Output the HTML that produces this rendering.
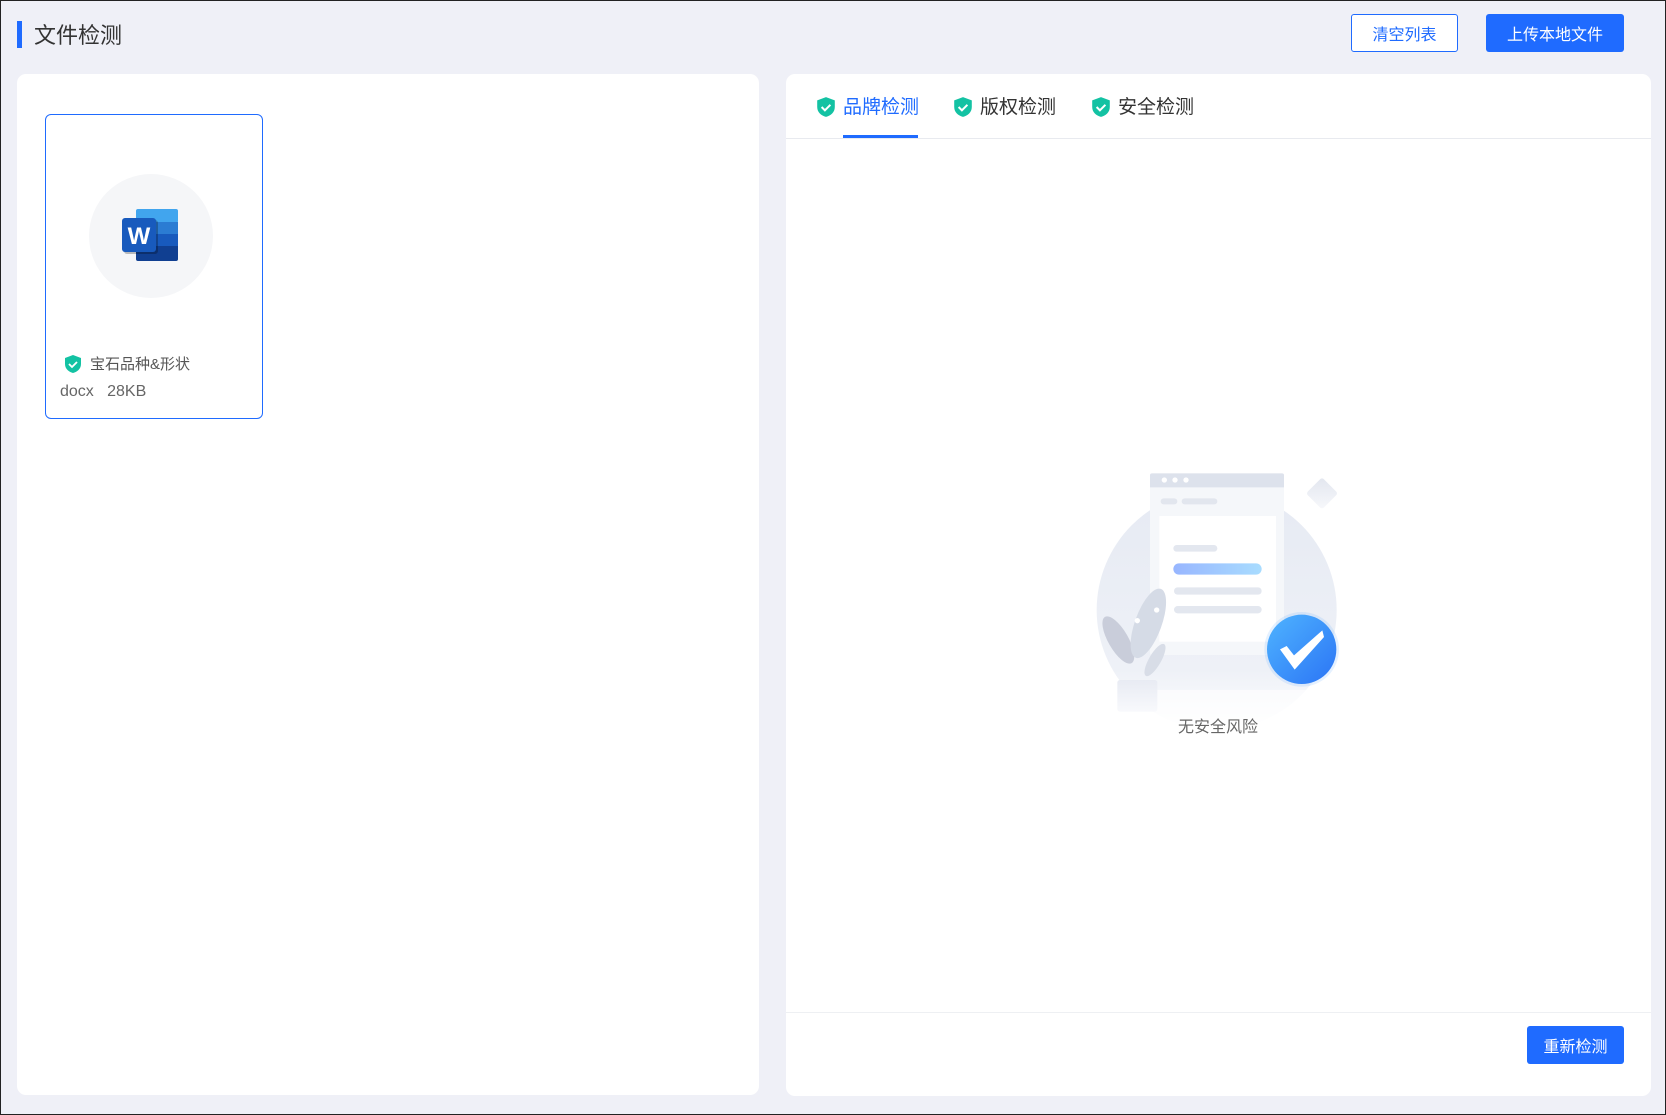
<!DOCTYPE html>
<html><head><meta charset="utf-8"><style>
html,body{margin:0;padding:0;}
body{width:1666px;height:1115px;position:relative;overflow:hidden;background:#eff0f7;font-family:"Liberation Sans","Noto Sans CJK SC",sans-serif;}
.frame{position:absolute;left:0;top:0;width:1664px;height:1113px;border:1px solid #222;}
.abs{position:absolute;}
.panel{background:#fff;border-radius:9px;}
.btn{position:absolute;box-sizing:border-box;display:flex;align-items:center;justify-content:center;font-size:16px;border-radius:3px;}
</style></head><body>
<div class="frame"></div>
<div class="abs" style="left:17px;top:21px;width:5px;height:27px;background:#1f6bff"></div>
<div class="abs" style="left:34px;top:21px;font-size:22px;line-height:30px;color:#333">文件检测</div>
<div class="btn" style="left:1351px;top:14px;width:107px;height:38px;border:1px solid #1f6bff;background:#fff;color:#1f6bff">清空列表</div>
<div class="btn" style="left:1486px;top:14px;width:138px;height:38px;background:#1f6bff;color:#fff">上传本地文件</div>

<div class="abs panel" style="left:17px;top:74px;width:742px;height:1021px"></div>
<div class="abs panel" style="left:786px;top:74px;width:865px;height:1022px"></div>

<!-- file card -->
<div class="abs" style="left:45px;top:114px;width:218px;height:305px;box-sizing:border-box;border:1px solid #1f6bff;border-radius:6px;background:#fff"></div>
<div class="abs" style="left:89px;top:174px;width:124px;height:124px;border-radius:50%;background:#f5f6f8"></div>
<svg class="abs" style="left:122px;top:208px" width="60" height="58" viewBox="0 0 60 58">
<rect x="14" y="1" width="42" height="14" rx="2" fill="#41a5ee"/>
<rect x="14" y="14" width="42" height="13" fill="#2b7cd3"/>
<rect x="14" y="26" width="42" height="13" fill="#185abd"/>
<path d="M14 38h42v13a2 2 0 0 1-2 2H16a2 2 0 0 1-2-2z" fill="#103f91"/>
<rect x="2" y="12" width="34" height="34" rx="3" fill="#000" opacity=".25"/>
<rect x="0" y="10" width="34" height="34" rx="3" fill="#185abd"/>
<text x="17" y="36" text-anchor="middle" font-size="24" font-weight="bold" fill="#fff" font-family="Liberation Sans,sans-serif">W</text>
</svg>
<svg class="abs" style="left:64px;top:354px" width="18" height="20" viewBox="0 0 18 20"><path d="M9 1 L17 4 V10 C17 15 13 18 9 19 C5 18 1 15 1 10 V4 Z" fill="#13c2a3"/><path d="M5 10l3 3 5-5" stroke="#fff" stroke-width="1.8" fill="none"/></svg>
<div class="abs" style="left:90px;top:354px;font-size:15px;line-height:22px;color:#555">宝石品种&amp;形状</div>
<div class="abs" style="left:60px;top:381px;font-size:16px;line-height:22px;color:#666">docx&nbsp;&nbsp;&nbsp;28KB</div>

<!-- tabs -->
<svg class="abs" style="left:816px;top:96px" width="20" height="22" viewBox="0 0 18 20"><path d="M9 1 L17 4 V10 C17 15 13 18 9 19 C5 18 1 15 1 10 V4 Z" fill="#13c2a3"/><path d="M5 10l3 3 5-5" stroke="#fff" stroke-width="1.8" fill="none"/></svg>
<div class="abs" style="left:843px;top:95px;font-size:19px;line-height:26px;color:#1f6bff">品牌检测</div>
<svg class="abs" style="left:953px;top:96px" width="20" height="22" viewBox="0 0 18 20"><path d="M9 1 L17 4 V10 C17 15 13 18 9 19 C5 18 1 15 1 10 V4 Z" fill="#13c2a3"/><path d="M5 10l3 3 5-5" stroke="#fff" stroke-width="1.8" fill="none"/></svg>
<div class="abs" style="left:980px;top:95px;font-size:19px;line-height:26px;color:#333">版权检测</div>
<svg class="abs" style="left:1091px;top:96px" width="20" height="22" viewBox="0 0 18 20"><path d="M9 1 L17 4 V10 C17 15 13 18 9 19 C5 18 1 15 1 10 V4 Z" fill="#13c2a3"/><path d="M5 10l3 3 5-5" stroke="#fff" stroke-width="1.8" fill="none"/></svg>
<div class="abs" style="left:1118px;top:95px;font-size:19px;line-height:26px;color:#333">安全检测</div>
<div class="abs" style="left:843px;top:135px;width:75px;height:3px;background:#1f6bff"></div>
<div class="abs" style="left:786px;top:138px;width:865px;height:1px;background:#e8eaef"></div>
<div class="abs" style="left:786px;top:1012px;width:865px;height:1px;background:#eef0f3"></div>
<div class="btn" style="left:1527px;top:1026px;width:97px;height:38px;background:#1f6bff;color:#fff">重新检测</div>

<!-- illustration -->
<svg class="abs" style="left:1060px;top:450px" width="300" height="300" viewBox="0 0 900 900">
<defs>
<linearGradient id="cg" x1="0" y1="0" x2="0" y2="1"><stop offset="0" stop-color="#e6eaf3"/><stop offset="0.75" stop-color="#eef1f7"/><stop offset="1" stop-color="#fff"/></linearGradient>
<linearGradient id="bar" x1="0" x2="1"><stop offset="0" stop-color="#98b6ff"/><stop offset="1" stop-color="#a8dcff"/></linearGradient>
<linearGradient id="chk" x1="0" y1="0" x2="1" y2="1"><stop offset="0" stop-color="#4fb4ff"/><stop offset="1" stop-color="#2b74f5"/></linearGradient>
<linearGradient id="pot" x1="0" y1="0" x2="0" y2="1"><stop offset="0" stop-color="#e8ebf3"/><stop offset="1" stop-color="#f8f9fc"/></linearGradient>
<linearGradient id="dia" x1="0" y1="0" x2="1" y2="1"><stop offset="0" stop-color="#e2e6ef"/><stop offset="1" stop-color="#f7f8fb"/></linearGradient>
</defs>
<circle cx="470" cy="480" r="360" fill="url(#cg)"/>
<rect x="0" y="720" width="900" height="180" fill="#fff" opacity="0.6"/>
<rect x="752" y="96" width="68" height="68" rx="8" transform="rotate(45 786 130)" fill="url(#dia)"/>
<rect x="270" y="70" width="402" height="545" rx="6" fill="#f5f7fa"/>
<path d="M276 70h390a6 6 0 0 1 6 6v36H270V76a6 6 0 0 1 6-6z" fill="#dde2ec"/>
<circle cx="313" cy="90" r="8" fill="#fff"/><circle cx="345" cy="90" r="8" fill="#fff"/><circle cx="378" cy="90" r="8" fill="#fff"/>
<rect x="302" y="145" width="50" height="18" rx="9" fill="#e2e6ee"/>
<rect x="365" y="145" width="107" height="18" rx="9" fill="#e2e6ee"/>
<rect x="298" y="198" width="350" height="377" fill="#fff"/>
<rect x="340" y="285" width="132" height="20" rx="10" fill="#e3e7ef"/>
<rect x="340" y="340" width="265" height="34" rx="17" fill="url(#bar)"/>
<rect x="342" y="412" width="263" height="22" rx="11" fill="#e3e7ef"/>
<rect x="342" y="468" width="263" height="22" rx="11" fill="#e3e7ef"/>
<ellipse cx="175" cy="570" rx="30" ry="80" transform="rotate(-30 175 570)" fill="#c9cdda"/>
<ellipse cx="265" cy="520" rx="40" ry="110" transform="rotate(20 265 520)" fill="#d5dbe6"/>
<ellipse cx="285" cy="630" rx="18" ry="55" transform="rotate(30 285 630)" fill="#d8dde7"/>
<circle cx="232" cy="512" r="8" fill="#fff"/><circle cx="290" cy="480" r="8" fill="#fff"/>
<rect x="172" y="690" width="120" height="95" rx="8" fill="url(#pot)"/>
<circle cx="725" cy="598" r="112" fill="#4ea3ff" opacity="0.15"/>
<circle cx="725" cy="598" r="104" fill="url(#chk)"/>
<path d="M660 598 l20 -10 l22 28 l85 -75 l5 20 l-88 98 z" fill="#fff"/>
</svg>
<div class="abs" style="left:1168px;top:716px;width:100px;text-align:center;font-size:16px;line-height:24px;color:#666">无安全风险</div>
</body></html>
